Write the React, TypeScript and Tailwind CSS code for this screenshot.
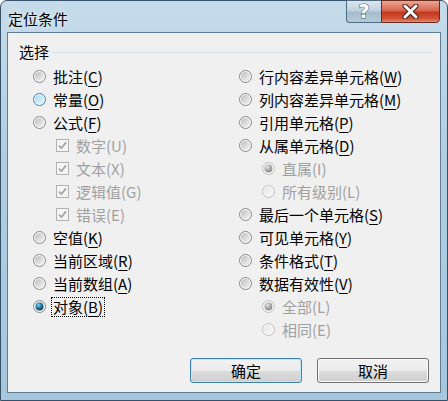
import React, { useId } from "react";

type RadioState = "normal" | "hover" | "checked" | "disabled" | "disabledChecked";

const Radio: React.FC<{ state: RadioState }> = ({ state }) => {
  const id = useId().replace(/:/g, "");
  const disabled = state === "disabled" || state === "disabledChecked";
  const ring = state === "hover" ? "#3c7fb1" : disabled ? "#bcbcbc" : "#858585";
  const from = state === "hover" ? "#a6daf5" : disabled ? "#e6e6e6" : "#bdbdbd";
  const to = state === "hover" ? "#e6f6fd" : disabled ? "#f8f8f8" : "#f5f5f5";
  return (
    <svg width="13" height="13" viewBox="0 0 13 13" className="shrink-0">
      <defs>
        <linearGradient id={`f${id}`} x1="0" y1="0" x2="1" y2="1">
          <stop offset="0" stopColor={from} />
          <stop offset="1" stopColor={to} />
        </linearGradient>
        <radialGradient id={`d${id}`} cx="0.38" cy="0.32" r="0.7">
          <stop offset="0" stopColor={disabled ? "#e8e8e8" : "#86d8f4"} />
          <stop offset="0.45" stopColor={disabled ? "#b4b4b4" : "#2a86b2"} />
          <stop offset="1" stopColor={disabled ? "#8a8a8a" : "#0e3650"} />
        </radialGradient>
      </defs>
      <circle cx="6.5" cy="6.5" r="6" fill="#fafafa" stroke={ring} strokeWidth="1" />
      <circle cx="6.5" cy="6.5" r="4.6" fill={`url(#f${id})`} />
      {(state === "checked" || state === "disabledChecked") && (
        <circle cx="6.5" cy="6.5" r="3.9" fill={`url(#d${id})`} />
      )}
    </svg>
  );
};

const CheckDisabled: React.FC = () => (
  <svg width="13" height="13" viewBox="0 0 13 13" className="shrink-0">
    <rect x="0.5" y="0.5" width="12" height="12" fill="#f4f4f4" stroke="#b1b1b1" />
    <path d="M3 6.6 L5.4 9.2 L10 3.4" fill="none" stroke="#a6a6a6" strokeWidth="1.8" />
  </svg>
);

const Caption: React.FC<{ text: string; k: string; disabled?: boolean }> = ({ text, k, disabled }) => (
  <span className={disabled ? "text-[#a0a0a0]" : "text-black"}>
    {text}(
    {disabled ? k : <span className="underline underline-offset-[3px] decoration-1">{k}</span>})
  </span>
);

type Item = { text: string; k: string; kind: "radio" | "check"; state?: RadioState; indent?: boolean; focus?: boolean };

const left: Item[] = [
  { text: "批注", k: "C", kind: "radio", state: "normal" },
  { text: "常量", k: "O", kind: "radio", state: "hover" },
  { text: "公式", k: "F", kind: "radio", state: "normal" },
  { text: "数字", k: "U", kind: "check", indent: true },
  { text: "文本", k: "X", kind: "check", indent: true },
  { text: "逻辑值", k: "G", kind: "check", indent: true },
  { text: "错误", k: "E", kind: "check", indent: true },
  { text: "空值", k: "K", kind: "radio", state: "normal" },
  { text: "当前区域", k: "R", kind: "radio", state: "normal" },
  { text: "当前数组", k: "A", kind: "radio", state: "normal" },
  { text: "对象", k: "B", kind: "radio", state: "checked", focus: true },
];

const right: Item[] = [
  { text: "行内容差异单元格", k: "W", kind: "radio", state: "normal" },
  { text: "列内容差异单元格", k: "M", kind: "radio", state: "normal" },
  { text: "引用单元格", k: "P", kind: "radio", state: "normal" },
  { text: "从属单元格", k: "D", kind: "radio", state: "normal" },
  { text: "直属", k: "I", kind: "radio", state: "disabledChecked", indent: true },
  { text: "所有级别", k: "L", kind: "radio", state: "disabled", indent: true },
  { text: "最后一个单元格", k: "S", kind: "radio", state: "normal" },
  { text: "可见单元格", k: "Y", kind: "radio", state: "normal" },
  { text: "条件格式", k: "T", kind: "radio", state: "normal" },
  { text: "数据有效性", k: "V", kind: "radio", state: "normal" },
  { text: "全部", k: "L", kind: "radio", state: "disabledChecked", indent: true },
  { text: "相同", k: "E", kind: "radio", state: "disabled", indent: true },
];

const Row: React.FC<{ item: Item }> = ({ item }) => {
  const disabled = item.kind === "check" || item.state === "disabled" || item.state === "disabledChecked";
  return (
    <div className={`flex items-center h-[23px] ${item.indent ? "pl-[23px]" : ""}`}>
      {item.kind === "radio" ? <Radio state={item.state ?? "normal"} /> : <CheckDisabled />}
      <div className={`ml-[5px] px-px leading-[18px] border border-dotted ${item.focus ? "border-black" : "border-transparent"}`}>
        <Caption text={item.text} k={item.k} disabled={disabled} />
      </div>
    </div>
  );
};

const App: React.FC = () => {
  return (
    <div className="w-[448px] h-[401px] font-['Noto_Sans_CJK_SC','Noto_Sans',sans-serif] text-[15px] bg-white">
      <div className="w-full h-full flex flex-col rounded-t-[7px] border border-[#35526a] bg-[linear-gradient(180deg,#c6dbea_0%,#b2cde0_40%,#a8c6db_100%)]">
        <div className="h-[31px] flex items-start justify-between pl-[7px] pr-[7px]">
          <div className="pt-[8px] leading-[20px] text-black [text-shadow:0_0_6px_#ffffff]">定位条件</div>
          <div className="flex -mt-px">
            <div className="w-[35px] h-[23px] flex items-center justify-center rounded-bl-[4px] border border-r-0 border-[#4f6b82] bg-[linear-gradient(180deg,#dbe6ee_0%,#c0d2df_45%,#a4bccd_55%,#b6cbd9_100%)]">
              <span className="text-[19px] font-bold leading-none text-white [-webkit-text-stroke:1px_#3d5a72] [paint-order:stroke_fill] font-['DejaVu_Sans',sans-serif]">?</span>
            </div>
            <div className="w-[59px] h-[23px] flex items-center justify-center rounded-br-[4px] border border-[#6b2a20] bg-[linear-gradient(180deg,#eaa793_0%,#d76550_45%,#c2391f_55%,#d2563a_85%,#e88f6c_100%)]">
              <svg width="17" height="15" viewBox="0 0 17 15">
                <path d="M3 2 L14 13 M14 2 L3 13" stroke="#4a1a14" strokeWidth="5" strokeLinecap="round" />
                <path d="M3 2 L14 13 M14 2 L3 13" stroke="#ffffff" strokeWidth="3" strokeLinecap="round" />
              </svg>
            </div>
          </div>
        </div>
        <div className="flex-1 mx-[6px] mb-[7px] border border-[#5d7c95] bg-[#f0f0f0] flex flex-col">
          <div className="flex items-center pt-[9px] pl-[11px] pr-[8px]">
            <span className="leading-[20px] text-black">选择</span>
            <div className="flex-1 h-px ml-[3px] mt-px bg-[#d5dfe5]" />
          </div>
          <div className="flex mt-[3px] pl-[25px]">
            <div className="w-[206px] flex flex-col">
              {left.map((it) => (
                <Row key={it.text} item={it} />
              ))}
            </div>
            <div className="flex flex-col">
              {right.map((it) => (
                <Row key={it.text} item={it} />
              ))}
            </div>
          </div>
          <div className="flex-1" />
          <div className="flex justify-end gap-[15px] pr-[11px] mb-[9px]">
            <button className="w-[112px] h-[25px] rounded-[3px] border border-[#3c7fb1] shadow-[inset_0_0_0_1px_#bfe6f8] bg-[linear-gradient(180deg,#f2f2f2_0%,#ebebeb_50%,#dddddd_50%,#cfcfcf_100%)] text-black leading-none">
              确定
            </button>
            <button className="w-[112px] h-[25px] rounded-[3px] border border-[#707070] shadow-[inset_0_0_0_1px_#fbfbfb] bg-[linear-gradient(180deg,#f2f2f2_0%,#ebebeb_50%,#dddddd_50%,#cfcfcf_100%)] text-black leading-none">
              取消
            </button>
          </div>
        </div>
      </div>
    </div>
  );
};

export default App;
